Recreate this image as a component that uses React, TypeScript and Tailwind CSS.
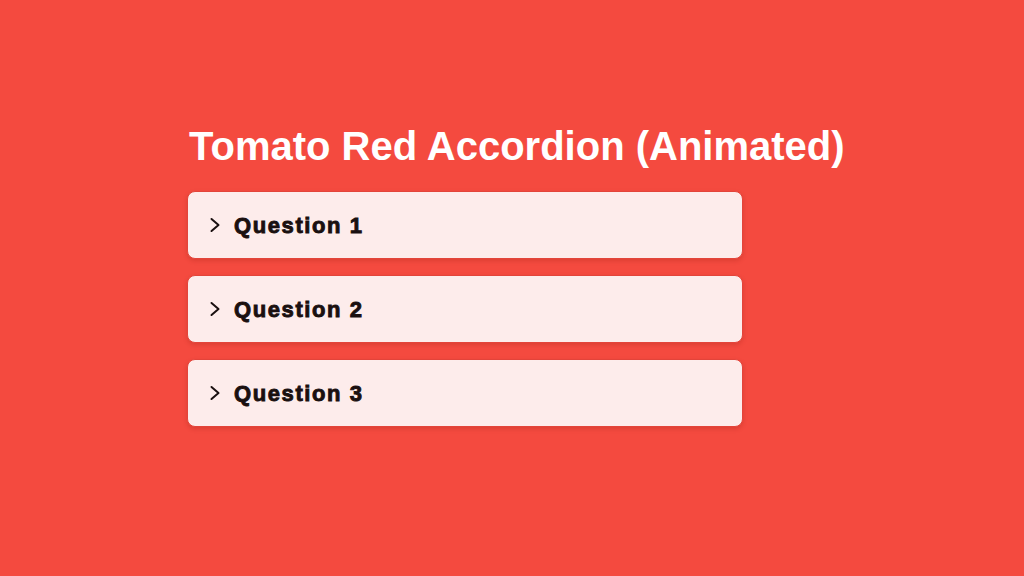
import { useState } from "react"

const questions = [
  { id: 1, title: "Question 1", answer: "This is the answer to question 1." },
  { id: 2, title: "Question 2", answer: "This is the answer to question 2." },
  { id: 3, title: "Question 3", answer: "This is the answer to question 3." },
]

function Chevron({ open }: { open: boolean }) {
  return (
    <svg
      width="12"
      height="16"
      viewBox="0 0 12 16"
      fill="none"
      stroke="currentColor"
      strokeWidth="2"
      strokeLinecap="round"
      strokeLinejoin="round"
      className={open ? "rotate-90 transition-transform" : "transition-transform"}
    >
      <path d="M2.5 2l7 6-7 6" />
    </svg>
  )
}

export default function App() {
  const [openId, setOpenId] = useState<number | null>(null)

  return (
    <main className="min-h-screen w-full bg-[#f44a3f] font-['Liberation_Sans',Arial,sans-serif]">
      <div className="pl-[187px] pt-[121px]">
        <h1 className="pl-[2px] text-[40px] font-bold leading-[50px] text-white">
          Tomato Red Accordion (Animated)
        </h1>
        <div className="mt-[20px] flex w-[556px] flex-col gap-[16px]">
          {questions.map((q) => {
            const open = openId === q.id
            return (
              <div
                key={q.id}
                className="overflow-hidden rounded-lg border border-[#e3443a] bg-[#fdeceb] shadow-[0_2px_4px_rgba(150,30,20,0.25)]"
              >
                <button
                  type="button"
                  onClick={() => setOpenId(open ? null : q.id)}
                  className="flex h-[66px] w-full items-center gap-[13px] pl-[21px] text-left text-[#1a1010]"
                >
                  <Chevron open={open} />
                  <span className="text-[22px] font-bold tracking-[1.6px] [-webkit-text-stroke:0.9px_#1a1010]">
                    {q.title}
                  </span>
                </button>
                {open ? (
                  <div className="px-[22px] pb-4 text-sm text-[#3a1a18]">{q.answer}</div>
                ) : null}
              </div>
            )
          })}
        </div>
      </div>
    </main>
  )
}
